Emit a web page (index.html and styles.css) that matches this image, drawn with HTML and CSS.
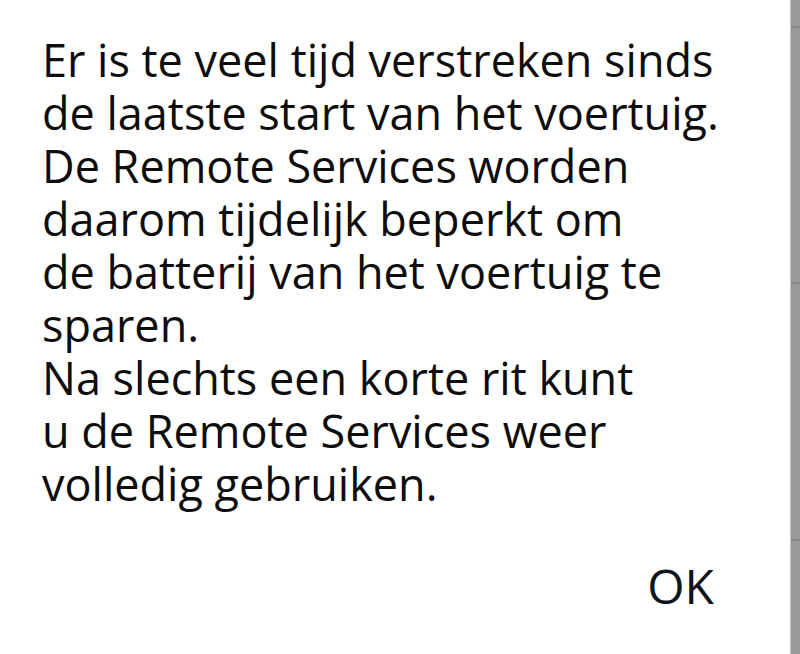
FILE: index.html
```html
<!DOCTYPE html>
<html>
<head>
<meta charset="utf-8">
<link rel="stylesheet" href="styles.css">
</head>
<body>
<div class="screen">
  <div class="dialog">
    <p class="message">Er is te veel tijd verstreken sinds<br>de laatste start van het voertuig.<br>De Remote Services worden<br>daarom tijdelijk beperkt om<br>de batterij van het voertuig te<br>sparen.<br>Na slechts een korte rit kunt<br>u de Remote Services weer<br>volledig gebruiken.</p>
    <div class="actions"><span class="ok">OK</span></div>
  </div>
  <div class="edge">
    <div class="seg seg-a"></div>
    <div class="tick"></div>
    <div class="seg seg-b"></div>
    <div class="tick"></div>
    <div class="seg seg-c"></div>
    <div class="tick"></div>
  </div>
</div>
</body>
</html>
```
FILE: styles.css
```css
html, body { margin: 0; padding: 0; background: #9a9a9a; }
.screen { display: flex; width: 800px; height: 654px; overflow: hidden; background: #9a9a9a; }
.dialog { flex: 0 0 791px; width: 791px; box-sizing: border-box; display: flex; flex-direction: column; padding: 33px 0 0 42px; background: #fff; border-right: 1px solid #c4c4c4; }
.message { margin: 0; font-family: "Open Sans", sans-serif; font-size: 45px; line-height: 53px; color: #0d0d0d; font-variant-ligatures: none; }
.actions { display: flex; justify-content: flex-end; padding: 49px 76px 0 0; }
.ok { font-family: "Open Sans", sans-serif; font-size: 48px; line-height: 53px; color: #0f141a; }
.edge { flex: 1 1 auto; display: flex; flex-direction: column; background: #9a9a9a; }
.seg { flex: none; }
.seg-a { height: 26px; }
.seg-b { height: 254px; }
.seg-c { height: 255px; }
.tick { flex: none; height: 2px; background: #878787; }
```
